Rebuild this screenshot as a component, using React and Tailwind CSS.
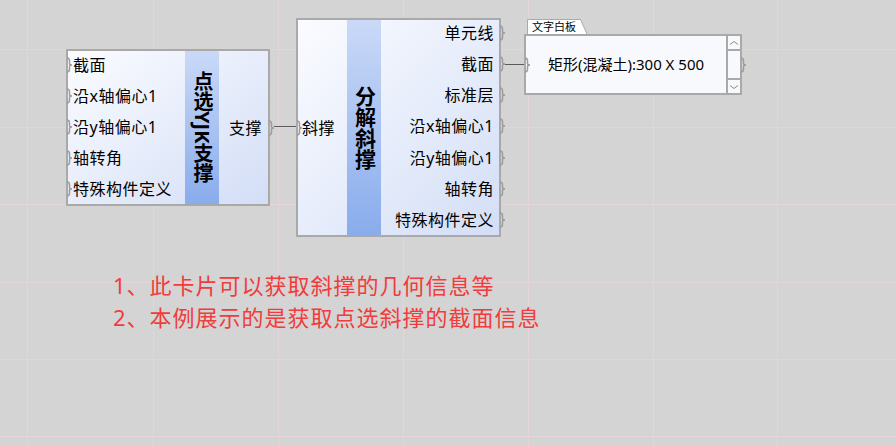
const FONT = "font-['Noto_Sans','Noto_Sans_CJK_SC',sans-serif]";

function Port({ className }) {
  return (
    <svg className={`absolute ${className}`} width="7" height="16" viewBox="0 0 7 16">
      <path
        d="M1 1 Q3.5 1 3.5 4 L3.5 6.5 Q3.5 8 6 8 Q3.5 8 3.5 9.5 L3.5 12 Q3.5 15 1 15"
        fill="none"
        stroke="#9c9c9c"
        strokeWidth="1.5"
      />
    </svg>
  );
}

function Chevron({ down }) {
  return (
    <svg width="10" height="6" viewBox="0 0 10 6">
      <path d={down ? 'M1 1.5 L5 4.5 L9 1.5' : 'M1 4.5 L5 1.5 L9 4.5'} fill="none" stroke="#8c8c8c" strokeWidth="1" />
    </svg>
  );
}

const pickInputs = ['截面', '沿x轴偏心1', '沿y轴偏心1', '轴转角', '特殊构件定义'];
const splitOutputs = ['单元线', '截面', '标准层', '沿x轴偏心1', '沿y轴偏心1', '轴转角', '特殊构件定义'];
const gridX = [27, 153, 278, 403, 528, 653, 777];
const gridY = [49, 127, 204, 282, 359, 436];

export default function App() {
  return (
    <div className={`relative w-[895px] h-[446px] overflow-hidden bg-[#d4d4d4] text-black ${FONT}`}>
      {/* canvas grid */}
      <svg className="absolute inset-0" width="895" height="446">
        {gridX.map((x) => (
          <line key={`x${x}`} x1={x + 0.5} y1="0" x2={x + 0.5} y2="446" stroke="#e4d5d8" strokeWidth="1" />
        ))}
        {gridY.map((y) => (
          <line key={`y${y}`} x1="0" y1={y + 0.5} x2="895" y2={y + 0.5} stroke="#e4d5d8" strokeWidth="1" />
        ))}
      </svg>

      {/* 点选YJK支撑 */}
      <div className="absolute left-[66px] top-[49px] w-[204px] h-[157px] border-2 border-[#a9a9a9] bg-linear-to-br from-[#fbfcff] to-[#d3def6] flex">
        <div className="w-[117px] flex flex-col justify-between pt-[1px] pb-[2px]">
          {pickInputs.map((t) => (
            <div key={t} className="relative h-[26px] flex items-center pl-[5px] text-[16px] tracking-[0.5px] whitespace-nowrap">
              <Port className="left-[-2px] top-[5px]" />
              {t}
            </div>
          ))}
        </div>
        <div className="w-[34px] flex items-center justify-center bg-linear-to-b from-[#cad9f7] to-[#89acec]">
          <span className="[writing-mode:vertical-rl] font-bold text-[20px] leading-none">点选YJK支撑</span>
        </div>
        <div className="relative flex-1 flex items-center justify-end pr-[6px] text-[16px] tracking-[0.5px]">
          支撑
          <Port className="right-[-7px] top-1/2 -translate-y-1/2" />
        </div>
      </div>

      <div className="absolute left-[274px] top-[126px] w-[22px] h-px bg-[#5a5a5a]" />

      {/* 分解斜撑 */}
      <div className="absolute left-[296px] top-[18px] w-[205px] h-[219px] border-2 border-[#a9a9a9] bg-linear-to-br from-[#fbfcff] to-[#d3def6] flex">
        <div className="relative w-[49px] flex items-center pl-[4px] text-[16px] tracking-[0.5px]">
          <Port className="left-[-2px] top-1/2 -translate-y-1/2" />
          斜撑
        </div>
        <div className="w-[34px] flex items-center justify-center bg-linear-to-b from-[#cad9f7] to-[#89acec]">
          <span className="[writing-mode:vertical-rl] font-bold text-[21px] leading-none">分解斜撑</span>
        </div>
        <div className="flex-1 flex flex-col justify-between pb-[2px]">
          {splitOutputs.map((t) => (
            <div key={t} className="relative h-[26px] flex items-center justify-end pr-[5px] text-[16px] tracking-[0.5px] whitespace-nowrap">
              {t}
              <Port className="right-[-7px] top-[5px]" />
            </div>
          ))}
        </div>
      </div>

      <div className="absolute left-[505px] top-[64px] w-[20px] h-px bg-[#5a5a5a]" />

      {/* 文字白板 */}
      <div className="absolute left-[527px] top-[19px] w-[61px] h-[16px]">
        <svg className="absolute inset-0" width="61" height="16" viewBox="0 0 61 16">
          <polygon points="0.5,16 0.5,0.5 53.5,0.5 60.5,16" fill="#ffffff" stroke="#a9a9a9" strokeWidth="1" />
        </svg>
        <span className="relative block pl-[5px] text-[11px] leading-[16px]">文字白板</span>
      </div>
      <div className="absolute left-[524px] top-[34px] w-[218px] h-[61px] border-2 border-[#a9a9a9] bg-[#f8f9fd] flex">
        <div className="relative flex-1 flex items-center justify-center text-[15px] whitespace-nowrap">
          <Port className="left-[-2px] top-1/2 -translate-y-1/2" />
          矩形(混凝土):300 X 500
        </div>
        <div className="w-[14px] border-l-2 border-[#a9a9a9] flex flex-col">
          <div className="h-[15px] border-b-2 border-[#a9a9a9] flex items-center justify-center">
            <Chevron />
          </div>
          <div className="relative flex-1">
            <Port className="right-[-7px] top-1/2 -translate-y-1/2" />
          </div>
          <div className="h-[15px] border-t-2 border-[#a9a9a9] flex items-center justify-center">
            <Chevron down />
          </div>
        </div>
      </div>

      {/* 说明 */}
      <div className="absolute left-[113px] top-[269px] text-[22px] leading-[32px] tracking-[1px] text-[#f03c3c] whitespace-nowrap">
        <p>1、此卡片可以获取斜撑的几何信息等</p>
        <p>2、本例展示的是获取点选斜撑的截面信息</p>
      </div>
    </div>
  );
}
